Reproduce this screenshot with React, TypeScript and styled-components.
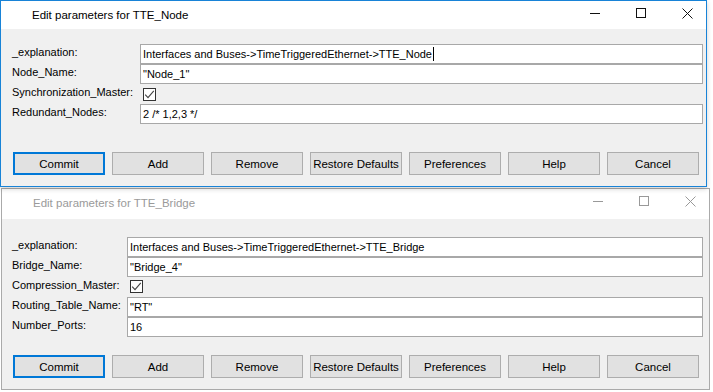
import React from "react";
import styled, { createGlobalStyle } from "styled-components";

const GlobalStyle = createGlobalStyle`
  body {
    margin: 0;
    background: #ffffff;
    font-family: "Liberation Sans", Arial, sans-serif;
  }
`;

const Screen = styled.div`
  display: flex;
  flex-direction: column;
  width: 713px;
  height: 392px;
  overflow: hidden;
`;

const Window = styled.div<{ active?: boolean; w: number; h: number; ml?: number; mt?: number }>`
  position: relative;
  z-index: ${(p) => (p.active ? 2 : 1)};
  display: flex;
  flex-direction: column;
  box-sizing: border-box;
  width: ${(p) => p.w}px;
  height: ${(p) => p.h}px;
  margin-left: ${(p) => p.ml || 0}px;
  margin-top: ${(p) => p.mt || 0}px;
  background: #f0f0f0;
  border: 1px solid ${(p) => (p.active ? "#1883d7" : "#aaaaaa")};
  box-shadow: ${(p) => (p.active ? "0 2px 5px rgba(0, 0, 0, 0.18)" : "none")};
`;

const TitleBar = styled.div<{ h: number }>`
  display: flex;
  align-items: flex-start;
  height: ${(p) => p.h}px;
  background: #ffffff;
  padding-left: 31px;
  box-sizing: border-box;
  flex-shrink: 0;
`;

const Title = styled.div<{ active?: boolean }>`
  flex: 1;
  font-size: 11.5px;
  line-height: 14px;
  padding-top: 7px;
  color: ${(p) => (p.active ? "#000000" : "#9a9a9a")};
`;

const Controls = styled.div`
  display: flex;
  gap: 35px;
  padding-top: 7px;
  padding-right: 13px;
`;

const CaptionIcon = styled.svg`
  display: block;
  width: 11px;
  height: 11px;
`;

const Body = styled.div<{ pt: number; pl: number; pr: number }>`
  display: flex;
  flex-direction: column;
  padding: ${(p) => `${p.pt}px ${p.pr}px 0 ${p.pl}px`};
`;

const FieldGrid = styled.div<{ labelWidth: number }>`
  display: grid;
  grid-template-columns: ${(p) => p.labelWidth}px 1fr;
  grid-auto-rows: 20px;
`;

const Label = styled.div`
  font-size: 11px;
  line-height: 14px;
  padding-top: 1px;
  color: #000000;
  white-space: nowrap;
`;

const Input = styled.div`
  display: flex;
  align-items: center;
  box-sizing: border-box;
  height: 20px;
  padding-left: 2px;
  background: #ffffff;
  border: 1px solid #a8a8a8;
  font-size: 11px;
  color: #000000;
  white-space: nowrap;
`;

const Caret = styled.span`
  display: inline-block;
  width: 1px;
  height: 14px;
  margin-left: 1px;
  background: #000000;
`;

const CheckCell = styled.div<{ top: number }>`
  padding: ${(p) => p.top}px 0 0 3px;
`;

const CheckBox = styled.div`
  width: 13px;
  height: 13px;
  box-sizing: border-box;
  border: 1px solid #333333;
  background: #ffffff;

  svg {
    display: block;
  }
`;

const ButtonRow = styled.div<{ mt: number }>`
  display: flex;
  gap: 7px;
  margin-top: ${(p) => p.mt}px;
  margin-left: 1px;
`;

const Button = styled.div<{ primary?: boolean }>`
  display: flex;
  align-items: center;
  justify-content: center;
  box-sizing: border-box;
  width: 92px;
  height: 23px;
  background: #e1e1e1;
  border: ${(p) => (p.primary ? "2px solid #0078d7" : "1px solid #adadad")};
  font-size: 11.5px;
  color: #000000;
`;

const Check = () => (
  <CheckBox>
    <svg width="11" height="11" viewBox="0 0 11 11">
      <path d="M1.2 5.6 L4 8.6 L9.8 1.8" fill="none" stroke="#444" strokeWidth="1.1" />
    </svg>
  </CheckBox>
);

const CaptionButtons = ({ color }: { color: string }) => (
  <Controls>
    <CaptionIcon viewBox="0 0 11 11">
      <path d="M0 5.5 H10" stroke={color} strokeWidth="1" />
    </CaptionIcon>
    <CaptionIcon viewBox="0 0 11 11">
      <rect x="0.5" y="0.5" width="9" height="9" fill="none" stroke={color} strokeWidth="1" />
    </CaptionIcon>
    <CaptionIcon viewBox="0 0 11 11">
      <path d="M0.5 0.5 L10.5 10.5 M10.5 0.5 L0.5 10.5" stroke={color} strokeWidth="1" />
    </CaptionIcon>
  </Controls>
);

type Field = { label: string; value?: string; check?: boolean; caret?: boolean };

const buttons = ["Commit", "Add", "Remove", "Restore Defaults", "Preferences", "Help", "Cancel"];

const Dialog = ({
  title,
  active,
  fields,
  w,
  h,
  ml,
  mt,
  titleH,
  pt,
  pl,
  pr,
  labelWidth,
  buttonGap,
  checkTop,
}: {
  title: string;
  active?: boolean;
  fields: Field[];
  w: number;
  h: number;
  ml?: number;
  mt?: number;
  titleH: number;
  pt: number;
  pl: number;
  pr: number;
  labelWidth: number;
  buttonGap: number;
  checkTop: number;
}) => (
  <Window active={active} w={w} h={h} ml={ml} mt={mt}>
    <TitleBar h={titleH}>
      <Title active={active}>{title}</Title>
      <CaptionButtons color={active ? "#111" : "#999"} />
    </TitleBar>
    <Body pt={pt} pl={pl} pr={pr}>
      <FieldGrid labelWidth={labelWidth}>
        {fields.map((f) => (
          <React.Fragment key={f.label}>
            <Label>{f.label}</Label>
            {f.check ? (
              <CheckCell top={checkTop}>
                <Check />
              </CheckCell>
            ) : (
              <Input>
                {f.value}
                {f.caret && <Caret />}
              </Input>
            )}
          </React.Fragment>
        ))}
      </FieldGrid>
      <ButtonRow mt={buttonGap}>
        {buttons.map((b, i) => (
          <Button key={b} primary={i === 0}>
            {b}
          </Button>
        ))}
      </ButtonRow>
    </Body>
  </Window>
);

export default function App() {
  return (
    <Screen>
      <GlobalStyle />
      <Dialog
        title="Edit parameters for TTE_Node"
        active
        w={707}
        h={187}
        titleH={28}
        pt={15}
        pl={11}
        pr={3}
        labelWidth={128}
        buttonGap={28}
        checkTop={4}
        fields={[
          { label: "_explanation:", value: "Interfaces and Buses->TimeTriggeredEthernet->TTE_Node", caret: true },
          { label: "Node_Name:", value: "\"Node_1\"" },
          { label: "Synchronization_Master:", check: true },
          { label: "Redundant_Nodes:", value: "2 /* 1,2,3 */" },
        ]}
      />
      <Dialog
        title="Edit parameters for TTE_Bridge"
        w={709}
        h={202}
        ml={1}
        mt={1}
        titleH={30}
        pt={18}
        pl={10}
        pr={6}
        labelWidth={115}
        buttonGap={18}
        checkTop={3}
        fields={[
          { label: "_explanation:", value: "Interfaces and Buses->TimeTriggeredEthernet->TTE_Bridge" },
          { label: "Bridge_Name:", value: "\"Bridge_4\"" },
          { label: "Compression_Master:", check: true },
          { label: "Routing_Table_Name:", value: "\"RT\"" },
          { label: "Number_Ports:", value: "16" },
        ]}
      />
    </Screen>
  );
}
